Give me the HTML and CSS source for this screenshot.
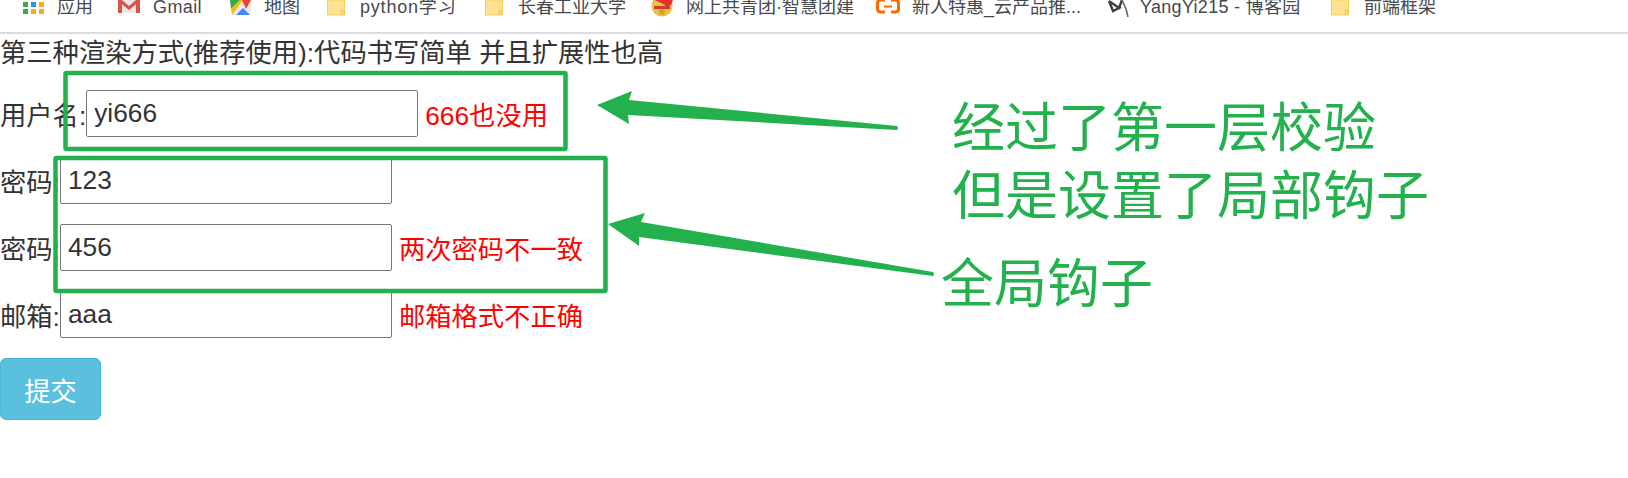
FILE: index.html
```html
<!DOCTYPE html>
<html>
<head>
  <title>第三种渲染方式</title>
  <link rel="stylesheet" href="styles.css">
</head>
<body>

  <!-- Bookmarks bar -->
  <div class="bookmarks">
    <a class="mark m-apps">
      <svg class="icon i-apps" viewBox="0 0 22 15"><rect x="0" y="2" width="5" height="5" fill="#34a853"/><rect x="8" y="2" width="5" height="5" fill="#2f8df0"/><rect x="16" y="2" width="5" height="5" fill="#fbac0f"/><rect x="0" y="9" width="5" height="5" fill="#34a853"/><rect x="8" y="9" width="5" height="5" fill="#fbac0f"/><rect x="16" y="9" width="5" height="5" fill="#fbac0f"/></svg>
      应用
    </a>
    <a class="mark m-gmail">
      <svg class="icon i-gmail" viewBox="0 0 24 14"><path d="M1 0h22v13H1z" fill="#e8e8e8"/><path d="M1 13V0h4v13zM19 13V0h4v13z" fill="#d9534a"/><path d="M1 0h4l7 6 7-6h4v1L12 10 1 1z" fill="#d9534a"/></svg>
      Gmail
    </a>
    <a class="mark m-maps">
      <svg class="icon i-maps" viewBox="0 0 22 16"><path d="M0 0h22l-2 15H2z" fill="#e9e9e9"/><path d="M0 0h10L1 9z" fill="#34a853"/><path d="M1 9L10 0h3L2 15z" fill="#fbbc05"/><path d="M6 15l7-7 7 7z" fill="#4285f4"/><path d="M12 0h9l-5 9z" fill="#ea4335"/></svg>
      地图
    </a>
    <a class="mark m-py">
      <svg class="icon i-folder" viewBox="0 0 18 16"><path d="M.5 0v15h17V0z" fill="#fde293" stroke="#f7cf5a"/><path d="M14 15v-3q0-2 1.500-2t1.500 2v3" fill="none" stroke="#f0c040"/></svg>
      python学习
    </a>
    <a class="mark m-cc">
      <svg class="icon i-folder" viewBox="0 0 18 16"><path d="M.5 0v15h17V0z" fill="#fde293" stroke="#f7cf5a"/><path d="M14 15v-3q0-2 1.500-2t1.500 2v3" fill="none" stroke="#f0c040"/></svg>
      长春工业大学
    </a>
    <a class="mark m-tuan">
      <svg class="icon i-tuan" viewBox="0 0 22 17"><circle cx="11" cy="6" r="10.500" fill="#e6c048"/><path d="M4 0h18l-2 5-5 2-1-2z" fill="#e0322a"/><path d="M3 6h16v3H3z" fill="#d43c2c"/><circle cx="11" cy="12" r="3" fill="#d8a428"/></svg>
      网上共青团·智慧团建
    </a>
    <a class="mark m-ali">
      <svg class="icon i-ali" viewBox="0 0 24 14"><path d="M9 0H5Q1.500 0 1.500 3v6q0 3 3.500 3h4M15 0h4q3.500 0 3.500 3v6q0 3-3.500 3h-4" fill="none" stroke="#ff6a00" stroke-width="3"/><path d="M8 6.500h8" stroke="#ff6a00" stroke-width="2"/></svg>
      新人特惠_云产品推...
    </a>
    <a class="mark m-cnb">
      <svg class="icon i-cnb" viewBox="0 0 22 17"><path d="M2 1L12 8 15 0M2 1L6 11 14 7" fill="none" stroke="#3f3f3f" stroke-width="2.400"/><path d="M15 0L19 9 21 17" fill="none" stroke="#666" stroke-width="1.600"/></svg>
      YangYi215 - 博客园
    </a>
    <a class="mark m-front">
      <svg class="icon i-folder" viewBox="0 0 18 16"><path d="M.5 0v15h17V0z" fill="#fde293" stroke="#f7cf5a"/><path d="M14 15v-3q0-2 1.500-2t1.500 2v3" fill="none" stroke="#f0c040"/></svg>
      前端框架
    </a>
  </div>

  <!-- Page content -->
  <div class="page">
    <p class="title">第三种渲染方式(推荐使用):代码书写简单 并且扩展性也高</p>
    <form class="user-form">
      <div class="row">
        <label>用户名:</label><input type="text" value="yi666"><span class="err">666也没用</span>
      </div>
      <div class="row">
        <label>密码:</label><input type="text" value="123">
      </div>
      <div class="row">
        <label>密码:</label><input type="text" value="456"><span class="err">两次密码不一致</span>
      </div>
      <div class="row">
        <label>邮箱:</label><input type="text" value="aaa"><span class="err">邮箱格式不正确</span>
      </div>
      <button type="button" class="btn">提交</button>
    </form>
  </div>

  <!-- Annotations drawn on top of the screenshot -->
  <svg class="marks" viewBox="0 0 1628 478">
    <rect x="65.500" y="73" width="500" height="76" rx="1" fill="none" stroke="#22b14c" stroke-width="4.500"/>
    <rect x="55.500" y="158" width="550" height="133" rx="1" fill="none" stroke="#22b14c" stroke-width="4.500"/>
    <path d="M597 105L632 91L629 100L897 126Q899 128 897 130L628 115L629 124Z" fill="#22b14c"/>
    <path d="M608 224L645 213L641 222L933 272Q935 274 933 276L639 237L639 246Z" fill="#22b14c"/>
  </svg>
  <div class="note n1">经过了第一层校验<br>但是设置了局部钩子</div>
  <div class="note n2">全局钩子</div>

</body>
</html>
```

FILE: styles.css
```css
* {
  box-sizing: border-box;
}

body {
  margin: 0;
  height: 478px;
  overflow: hidden;
  font-family: "Liberation Sans", "Noto Sans CJK SC", sans-serif;
  color: #333;
  background: #fff;
}

.bookmarks {
  display: flex;
  align-items: flex-start;
  height: 34px;
  padding-left: 23px;
  border-bottom: 2px solid #dadce0;
  overflow: hidden;
  font-size: 18px;
  line-height: 22px;
  color: #45484c;
}

.mark {
  display: flex;
  align-items: flex-start;
  flex: none;
  margin-top: -4px;
  white-space: nowrap;
}

.icon {
  margin-top: 4px;
  height: 16px;
}

.i-apps { width: 22px; height: 15px; margin-right: 12px; }
.i-gmail { width: 24px; height: 14px; margin-right: 12px; }
.i-maps { width: 22px; margin-right: 12px; }
.i-folder { width: 18px; margin-right: 15px; }
.i-tuan { width: 22px; height: 17px; margin-right: 13px; }
.i-ali { width: 24px; height: 14px; margin-right: 12px; }
.i-cnb { width: 22px; height: 17px; margin-right: 11px; }

.m-apps { width: 94px; }
.m-gmail { width: 113px; letter-spacing: 0.4px; }
.m-maps { width: 97px; }
.m-py { width: 158px; letter-spacing: 0.8px; }
.m-cc { width: 166px; }
.m-tuan { width: 225px; }
.m-ali { width: 231px; }
.m-cnb { width: 224px; letter-spacing: 0.3px; }

.page {
  font-size: 26.3px;
}

.title {
  margin: 1px 0 0;
  line-height: 36px;
}

.user-form {
  margin-top: 19px;
}

.row {
  display: flex;
  align-items: center;
  height: 47px;
  margin-bottom: 20px;
}

.row input {
  width: 332px;
  height: 47px;
  padding: 0 7px;
  border: 1px solid #767676;
  border-radius: 2px;
  font: inherit;
  color: #333;
}

.err {
  margin-left: 7px;
  color: #f00;
}

.btn {
  display: block;
  width: 101px;
  height: 62px;
  margin-top: 20px;
  border: 1px solid #46b8da;
  border-radius: 6px;
  background: #5bc0de;
  color: #fff;
  font: inherit;
}

.marks {
  position: absolute;
  left: 0;
  top: 0;
  width: 1628px;
  height: 478px;
}

.note {
  position: absolute;
  font-size: 53px;
  line-height: 68px;
  color: #22b14c;
  white-space: nowrap;
}

.n1 {
  left: 952px;
  top: 95px;
}

.n2 {
  left: 941px;
  top: 251px;
}
```
